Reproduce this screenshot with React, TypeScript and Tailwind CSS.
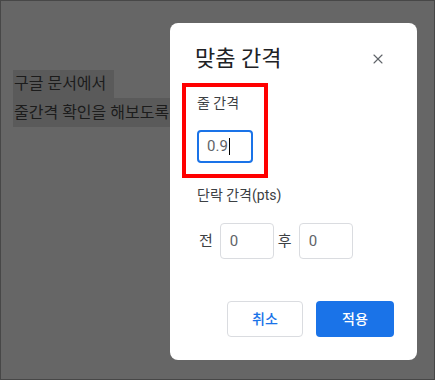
import { X } from 'lucide-react';

const font = { fontFamily: 'Roboto, "Noto Sans CJK KR", sans-serif' };

function NumBox({ value }: { value: string }) {
  return (
    <div className="flex h-[36px] w-[54px] items-center rounded border border-[#dadce0] pl-[9px] text-[15px] text-[#5f6368]">
      {value}
    </div>
  );
}

export default function App() {
  return (
    <div
      className="relative h-[380px] w-[435px] overflow-hidden border border-[#474747] bg-[#666666]"
      style={font}
    >
      {/* dimmed document text */}
      <div className="pl-[12px] pt-[69px] text-[16px] text-[#1c1c1c]">
        <div className="flex h-[28px] w-[101px] items-center bg-[#5a5a5a] pl-[1px]">구글 문서에서</div>
        <div className="flex h-[29px] w-[200px] items-center bg-[#5a5a5a] pl-[1px]">줄간격 확인을 해보도록</div>
      </div>

      {/* dialog */}
      <div className="absolute left-[169px] top-[22px] flex h-[337px] w-[247px] flex-col rounded-lg bg-white pl-[27px] pr-[23px] pt-[22px]">
        <div className="flex items-center justify-between">
          <div className="-ml-[2px] text-[22px] leading-[28px] text-[#202124]">맞춤 간격</div>
          <X size={16} strokeWidth={1.6} className="mr-[8px] text-[#5f6368]" />
        </div>

        <div className="-ml-[15px] mt-[10px] w-[86px] border-4 border-[#ff0000] pb-[11px] pl-[11px] pt-[6px]">
          <div className="text-[14px] leading-[20px] text-[#3c4043]">줄 간격</div>
          <div className="mt-[17px] flex h-[33px] w-[56px] items-center rounded border-2 border-[#1a73e8] pl-[8px] text-[15px] text-[#5f6368]">
            0.9<span className="ml-[1px] inline-block h-[17px] w-px bg-black" />
          </div>
        </div>

        <div className="mt-[7px] text-[14px] leading-[20px] text-[#3c4043]">단락 간격(pts)</div>

        <div className="mt-[18px] flex items-center text-[15px] text-[#3c4043]">
          <span className="ml-[2px] mr-[7px]">전</span>
          <NumBox value="0" />
          <span className="ml-[4px] mr-[7px]">후</span>
          <NumBox value="0" />
        </div>

        <div className="mt-[42px] flex justify-end gap-[13px]">
          <button className="h-[36px] w-[76px] rounded border border-[#dadce0] text-[14px] font-medium text-[#1a73e8]">
            취소
          </button>
          <button className="h-[36px] w-[78px] rounded bg-[#1a73e8] text-[14px] font-medium text-white">
            적용
          </button>
        </div>
      </div>
    </div>
  );
}
